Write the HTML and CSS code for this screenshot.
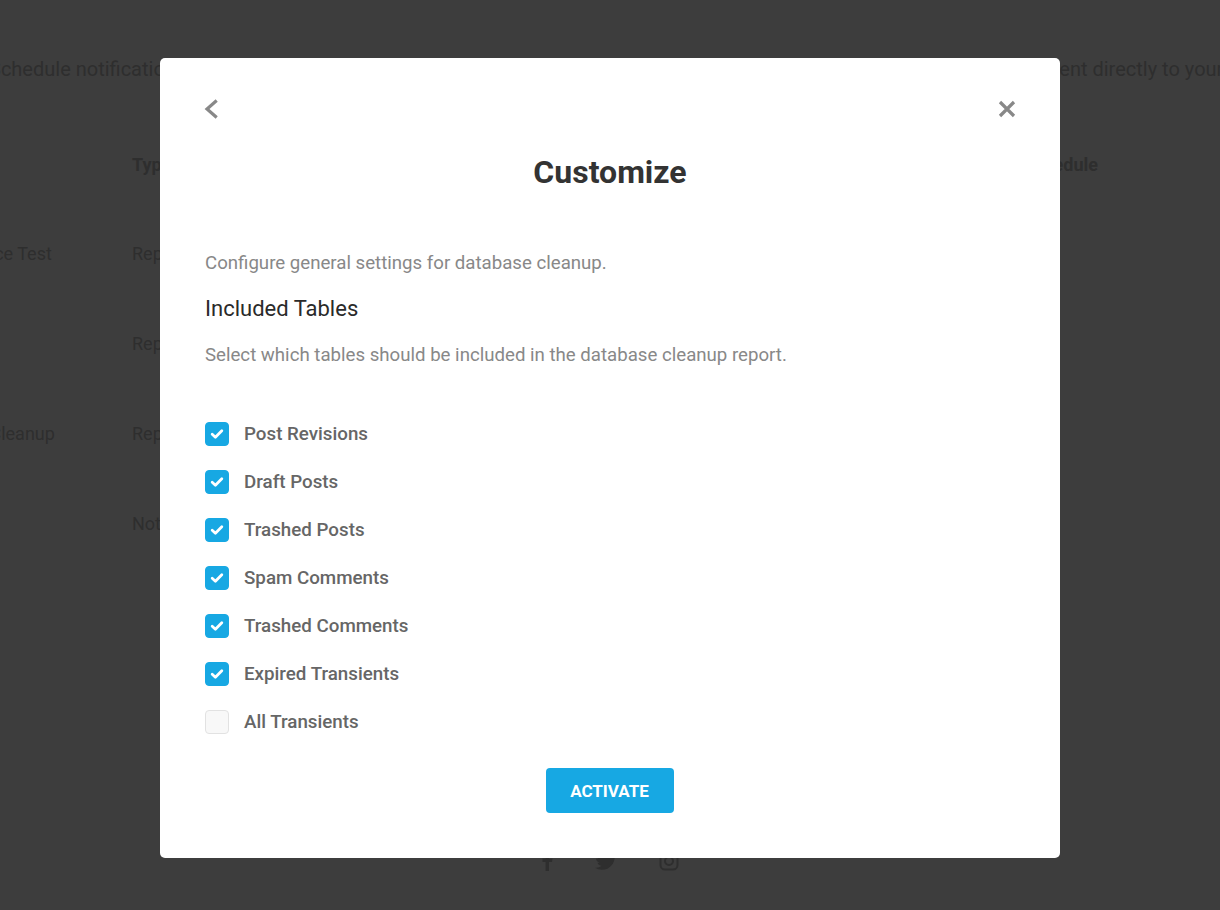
FILE: index.html
```html
<!DOCTYPE html>
<html>
<head>
<meta charset="utf-8">
<link rel="stylesheet" href="styles.css">
</head>
<body>
<div class="page">
  <p class="intro"><span class="intro-a">Schedule notifications and reports for your website and have them</span><span class="intro-b">sent directly to your inbox.</span></p>
  <div class="table">
    <div class="row head"><span class="c1">Name</span><span class="c2">Type</span><span class="c3">Schedule</span></div>
    <div class="row"><span class="c1">Performance Test</span><span class="c2">Report</span><span class="c3"></span></div>
    <div class="row"><span class="c1">Uptime</span><span class="c2">Report</span><span class="c3"></span></div>
    <div class="row"><span class="c1">Database Cleanup</span><span class="c2">Report</span><span class="c3"></span></div>
    <div class="row"><span class="c1">Security</span><span class="c2">Notification</span><span class="c3"></span></div>
  </div>
  <div class="social">
    <svg width="12" height="20" viewBox="0 0 12 20"><path d="M8 20V11h3l.5-3.5H8V5.3c0-1 .3-1.7 1.8-1.7H12V.5C11.6.4 10.5.3 9.2.3 6.5.3 4.6 2 4.6 5v2.5H1.5V11h3.1v9z" fill="#2e2e2e"/></svg>
    <svg width="22" height="18" viewBox="0 0 22 18"><path d="M22 2.1c-.8.4-1.7.6-2.6.7.9-.6 1.6-1.4 2-2.5-.9.5-1.9.9-2.9 1.1A4.5 4.5 0 0 0 10.8 5.5 12.8 12.8 0 0 1 1.5.8a4.5 4.5 0 0 0 1.4 6c-.7 0-1.4-.2-2-.6 0 2.2 1.6 4 3.6 4.4-.7.2-1.4.2-2 .1.6 1.8 2.2 3.1 4.2 3.1A9 9 0 0 1 0 15.7 12.8 12.8 0 0 0 6.9 17.7c8.3 0 12.8-6.9 12.8-12.8v-.6c.9-.6 1.7-1.4 2.3-2.2z" fill="#2e2e2e"/></svg>
    <svg width="20" height="20" viewBox="0 0 20 20"><rect x="1.5" y="1.5" width="17" height="17" rx="4.5" fill="none" stroke="#2e2e2e" stroke-width="2"/><circle cx="10" cy="10" r="4" fill="none" stroke="#2e2e2e" stroke-width="2"/></svg>
  </div>
</div>

<div class="overlay">
  <div class="modal">
    <div class="modal-top">
      <button class="icon-btn" aria-label="Back">
        <svg width="20" height="20" viewBox="0 0 20 20"><path d="M13.5 2.5 L5 10 L13.5 17.5" fill="none" stroke="#888" stroke-width="3.2" stroke-linecap="square"/></svg>
      </button>
      <button class="icon-btn" aria-label="Close">
        <svg width="20" height="20" viewBox="0 0 20 20"><path d="M3 3 L17 17 M17 3 L3 17" fill="none" stroke="#888" stroke-width="3.2"/></svg>
      </button>
    </div>
    <h1 class="title">Customize</h1>
    <p class="desc">Configure general settings for database cleanup.</p>
    <h2 class="subtitle">Included Tables</h2>
    <p class="desc small-gap">Select which tables should be included in the database cleanup report.</p>
    <ul class="checks">
      <li><span class="box on"><svg width="14" height="12" viewBox="0 0 14 12"><path d="M2.2 6.3 L5.4 9.2 L11.8 2.8" fill="none" stroke="#fff" stroke-width="2.8" stroke-linecap="round" stroke-linejoin="round"/></svg></span>Post Revisions</li>
      <li><span class="box on"><svg width="14" height="12" viewBox="0 0 14 12"><path d="M2.2 6.3 L5.4 9.2 L11.8 2.8" fill="none" stroke="#fff" stroke-width="2.8" stroke-linecap="round" stroke-linejoin="round"/></svg></span>Draft Posts</li>
      <li><span class="box on"><svg width="14" height="12" viewBox="0 0 14 12"><path d="M2.2 6.3 L5.4 9.2 L11.8 2.8" fill="none" stroke="#fff" stroke-width="2.8" stroke-linecap="round" stroke-linejoin="round"/></svg></span>Trashed Posts</li>
      <li><span class="box on"><svg width="14" height="12" viewBox="0 0 14 12"><path d="M2.2 6.3 L5.4 9.2 L11.8 2.8" fill="none" stroke="#fff" stroke-width="2.8" stroke-linecap="round" stroke-linejoin="round"/></svg></span>Spam Comments</li>
      <li><span class="box on"><svg width="14" height="12" viewBox="0 0 14 12"><path d="M2.2 6.3 L5.4 9.2 L11.8 2.8" fill="none" stroke="#fff" stroke-width="2.8" stroke-linecap="round" stroke-linejoin="round"/></svg></span>Trashed Comments</li>
      <li><span class="box on"><svg width="14" height="12" viewBox="0 0 14 12"><path d="M2.2 6.3 L5.4 9.2 L11.8 2.8" fill="none" stroke="#fff" stroke-width="2.8" stroke-linecap="round" stroke-linejoin="round"/></svg></span>Expired Transients</li>
      <li><span class="box"></span>All Transients</li>
    </ul>
    <div class="actions"><button class="activate">ACTIVATE</button></div>
  </div>
</div>
</body>
</html>
```

FILE: styles.css
```css
html, body {
  margin: 0;
  padding: 0;
}
body {
  width: 1220px;
  height: 910px;
  overflow: hidden;
  background: #3d3d3d;
  font-family: Roboto, "Liberation Sans", sans-serif;
  position: relative;
}
.page {
  color: #2e2e2e;
  padding-top: 55px;
}
.intro {
  margin: 0 0 0 -11px;
  font-size: 20px;
  line-height: 28px;
  white-space: nowrap;
  display: flex;
}
.intro-a {
  width: 1060px;
  flex: none;
  overflow: hidden;
}
.intro-b {
  flex: none;
}
.table {
  margin-top: 61px;
  margin-left: -91px;
}
.row {
  display: flex;
  height: 90px;
  align-items: center;
  font-size: 18px;
}
.row.head {
  height: 40px;
  font-weight: 700;
  margin-bottom: 24px;
}
.c1 { width: 223px; flex: none; }
.c2 { width: 891px; flex: none; }
.c3 { width: 200px; flex: none; }
.social {
  display: flex;
  gap: 42px;
  justify-content: center;
  align-items: center;
  margin-top: 283px;
}
.overlay {
  position: absolute;
  inset: 0;
  display: flex;
  justify-content: center;
  align-items: flex-start;
  padding-top: 58px;
}
.modal {
  width: 900px;
  height: 800px;
  box-sizing: border-box;
  background: #fff;
  border-radius: 5px;
  padding: 38px 43px 0 45px;
  display: flex;
  flex-direction: column;
}
.modal-top {
  display: flex;
  justify-content: space-between;
  height: 26px;
  align-items: center;
}
.icon-btn {
  background: none;
  border: 0;
  padding: 0;
  width: 20px;
  height: 20px;
  display: flex;
  align-items: center;
  justify-content: center;
  cursor: pointer;
}
.icon-btn:first-child {
  justify-content: flex-start;
  margin-left: -3px;
}
.title {
  margin: 30px 0 0 -2px;
  text-align: center;
  font-size: 32px;
  line-height: 40px;
  font-weight: 700;
  color: #333;
}
.desc {
  margin: 57px 0 0;
  font-size: 18.65px;
  line-height: 28px;
  color: #888;
}
.subtitle {
  margin: 18px 0 0;
  font-size: 22px;
  line-height: 28px;
  font-weight: 400;
  color: #2a2a2a;
}
.desc.small-gap {
  margin-top: 18px;
}
.checks {
  list-style: none;
  margin: 53px 0 0;
  padding: 0;
  display: flex;
  flex-direction: column;
  gap: 24px;
}
.checks li {
  display: flex;
  align-items: center;
  gap: 15px;
  height: 24px;
  font-size: 18.75px;
  font-weight: 500;
  color: #666;
}
.box {
  width: 24px;
  height: 24px;
  flex: none;
  box-sizing: border-box;
  border-radius: 4px;
  border: 1px solid #e2e2e2;
  background: #f8f8f8;
  display: flex;
  align-items: center;
  justify-content: center;
}
.box.on {
  background: #17a8e3;
  border-color: #17a8e3;
}
.actions {
  display: flex;
  justify-content: center;
  margin-top: 34px;
  margin-left: -3px;
}
.activate {
  width: 128px;
  height: 45px;
  border: 0;
  border-radius: 4px;
  background: #17a8e3;
  color: #fff;
  font-family: Roboto, "Liberation Sans", sans-serif;
  font-size: 17px;
  font-weight: 700;
  cursor: pointer;
}
```
